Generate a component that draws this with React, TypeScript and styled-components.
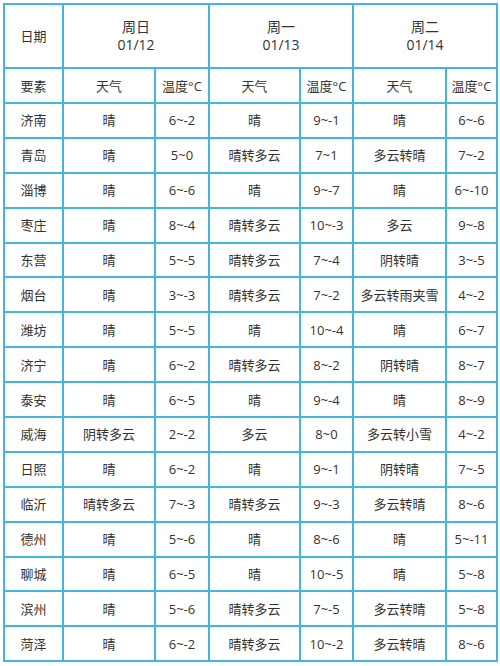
import { FC } from 'react';
import styled, { createGlobalStyle } from 'styled-components';

const GlobalStyle = createGlobalStyle`
    html, body {
        margin: 0;
        padding: 0;
        background: #ffffff;
    }
    body {
        font-family: "Open Sans", "Noto Sans CJK SC", sans-serif;
        color: #333333;
    }
`;

const Page = styled.div`
    padding: 3px 2px 0 3px;
    width: 500px;
    box-sizing: border-box;
`;

const Grid = styled.div`
    display: grid;
    grid-template-columns: 57px 90px 52px 89px 51px 91px 49px;
    grid-template-rows: 62px 33px repeat(16, 32.9px);
    gap: 2px;
    padding: 2px;
    background-color: #42b7da;
    width: 495px;
    box-sizing: border-box;
`;

const Cell = styled.div<{ $span?: number }>`
    background: #ffffff;
    display: flex;
    flex-direction: column;
    align-items: center;
    justify-content: center;
    font-size: 13px;
    line-height: 18px;
    white-space: nowrap;
    grid-column: span ${(p) => p.$span || 1};
`;

const DayCell = styled(Cell)`
    font-size: 14px;
    line-height: 18px;
`;

const days = [
    { name: '周日', date: '01/12' },
    { name: '周一', date: '01/13' },
    { name: '周二', date: '01/14' },
];

type Row = [string, string, string, string, string, string, string];

const rows: Row[] = [
    ['济南', '晴', '6~-2', '晴', '9~-1', '晴', '6~-6'],
    ['青岛', '晴', '5~0', '晴转多云', '7~1', '多云转晴', '7~-2'],
    ['淄博', '晴', '6~-6', '晴', '9~-7', '晴', '6~-10'],
    ['枣庄', '晴', '8~-4', '晴转多云', '10~-3', '多云', '9~-8'],
    ['东营', '晴', '5~-5', '晴转多云', '7~-4', '阴转晴', '3~-5'],
    ['烟台', '晴', '3~-3', '晴转多云', '7~-2', '多云转雨夹雪', '4~-2'],
    ['潍坊', '晴', '5~-5', '晴', '10~-4', '晴', '6~-7'],
    ['济宁', '晴', '6~-2', '晴转多云', '8~-2', '阴转晴', '8~-7'],
    ['泰安', '晴', '6~-5', '晴', '9~-4', '晴', '8~-9'],
    ['威海', '阴转多云', '2~-2', '多云', '8~0', '多云转小雪', '4~-2'],
    ['日照', '晴', '6~-2', '晴', '9~-1', '阴转晴', '7~-5'],
    ['临沂', '晴转多云', '7~-3', '晴转多云', '9~-3', '多云转晴', '8~-6'],
    ['德州', '晴', '5~-6', '晴', '8~-6', '晴', '5~-11'],
    ['聊城', '晴', '6~-5', '晴', '10~-5', '晴', '5~-8'],
    ['滨州', '晴', '5~-6', '晴转多云', '7~-5', '多云转晴', '5~-8'],
    ['菏泽', '晴', '6~-2', '晴转多云', '10~-2', '多云转晴', '8~-6'],
];

const App: FC = () => {
    return (
        <Page>
            <GlobalStyle />
            <Grid>
                <Cell>日期</Cell>
                {days.map((d) => (
                    <DayCell key={d.date} $span={2}>
                        <span>{d.name}</span>
                        <span>{d.date}</span>
                    </DayCell>
                ))}
                <Cell>要素</Cell>
                {days.map((d) => [
                    <Cell key={d.date + 'w'}>天气</Cell>,
                    <Cell key={d.date + 't'}>温度°C</Cell>,
                ])}
                {rows.map((r) =>
                    r.map((v, i) => <Cell key={r[0] + i}>{v}</Cell>)
                )}
            </Grid>
        </Page>
    );
};

export default App;
